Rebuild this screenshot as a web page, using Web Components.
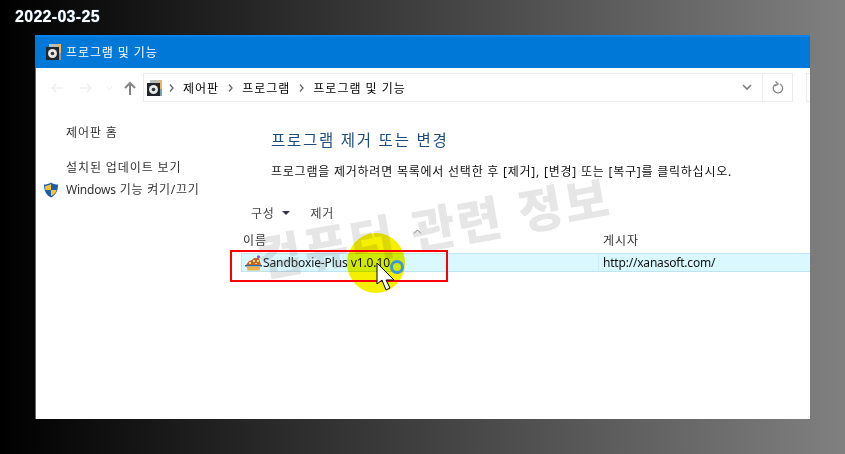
<!DOCTYPE html>
<html lang="ko">
<head>
<meta charset="utf-8">
<title>프로그램 및 기능</title>
<style>
    html, body { margin: 0; height: 100%; }
    body {
        width: 845px;
        height: 454px;
        overflow: hidden;
        background: linear-gradient(90deg, #000 0, #808080 100%);
        font: 12px "Noto Sans", "Noto Sans CJK KR", sans-serif;
    }
</style>
</head>
<body>
<shot-page>
    <explorer-window title-text="프로그램 및 기능">
        <address-bar slot="address"></address-bar>
        <side-links slot="side"></side-links>
        <program-list slot="main"></program-list>
    </explorer-window>
</shot-page>

<script>
const FONT = `"Noto Sans", "Noto Sans CJK KR", sans-serif`;

// 제어판 아이콘 (창 제목, 주소창 공용)
const cpIcon = /*html*/`
    <svg width="15" height="16" viewBox="0 0 15 16">
        <path d="M3 0h9v3H3z" fill="#b9bdb8"/>
        <path d="M12 0h3v9h-3z" fill="#f0b45c"/>
        <path d="M12 9h3v7h-3z" fill="#7d9fb0"/>
        <rect x="0" y="3" width="13" height="13" fill="#20262c"/>
        <circle cx="6.500" cy="9.500" r="4.500" fill="#e8e8e4"/>
        <circle cx="6.500" cy="9.500" r="1.800" fill="#30363a"/>
    </svg>`;

const crumbSep = (extra = '') => /*html*/`
    <svg class="sep" style="${extra}" width="5" height="8" viewBox="0 0 5 8"><path d="M1 0.500L4 4L1 7.500" fill="none" stroke="#666" stroke-width="1.300"/></svg>`;

class ShotPage extends HTMLElement {
    constructor() {
        super();
        this.attachShadow({ mode: 'open' }).innerHTML = /*html*/`
            <style>
                :host { display: block; width: 845px; height: 454px; position: relative; overflow: hidden; }
                .date {
                    height: 35px;
                    padding: 7px 0 0 15px;
                    box-sizing: border-box;
                    color: #fff;
                    font: bold 16px/20px "Liberation Sans", sans-serif;
                    letter-spacing: 0.3px;
                    text-shadow: 0 0 1px #8ab4e8;
                }
                .body { padding-left: 35px; }
            </style>
            <div class="date">2022-03-25</div>
            <div class="body"><slot></slot></div>
        `;
    }
}

class ExplorerWindow extends HTMLElement {
    constructor() {
        super();
        const title = this.getAttribute('title-text') || '';
        this.attachShadow({ mode: 'open' }).innerHTML = /*html*/`
            <style>
                :host {
                    display: block;
                    width: 775px;
                    height: 384px;
                    box-sizing: border-box;
                    background: #fff;
                    border-left: 1px solid #0a84e0;
                    font-family: ${FONT};
                }
                .title {
                    height: 33px;
                    margin-left: -1px;
                    background: linear-gradient(#0a84ea 0, #0a84ea 2px, #0078d7 2px);
                    display: flex;
                    align-items: center;
                    gap: 5px;
                    padding-left: 11px;
                    color: #fff;
                    font-size: 12px;
                    letter-spacing: 0.9px;
                }
                .title svg { flex: none; margin-top: 1px; }
                .columns { display: flex; }
                .side { width: 200px; flex: none; }
                .main { flex: 1; min-width: 0; }
            </style>
            <div class="title">${cpIcon}<span>${title}</span></div>
            <slot name="address"></slot>
            <div class="columns">
                <div class="side"><slot name="side"></slot></div>
                <div class="main"><slot name="main"></slot></div>
            </div>
        `;
    }
}

class AddressBar extends HTMLElement {
    constructor() {
        super();
        this.attachShadow({ mode: 'open' }).innerHTML = /*html*/`
            <style>
                :host {
                    display: flex;
                    height: 39px;
                    padding: 5px 0 5px 14px;
                    box-sizing: border-box;
                    align-items: stretch;
                    color: #000;
                    font-size: 12px;
                    letter-spacing: 1px;
                }
                .nav { width: 93px; flex: none; display: flex; align-items: center; }
                .nav svg { display: block; }
                .box {
                    width: 650px;
                    height: 29px;
                    box-sizing: border-box;
                    flex: none;
                    border: 1px solid #ececec;
                    display: flex;
                    align-items: center;
                    padding-left: 3px;
                }
                .crumbs { flex: 1; display: flex; align-items: center; gap: 9px; }
                .sep { flex: none; }
                .chev { width: 30px; display: flex; justify-content: center; }
                .reload {
                    width: 29px; align-self: stretch;
                    border-left: 1px solid #ececec;
                    display: flex; align-items: center; justify-content: center;
                }
                .search {
                    width: 4px; height: 29px; margin-left: 13px;
                    border: 1px solid #ececec; border-right: 0; box-sizing: border-box;
                }
            </style>
            <div class="nav">
                <svg width="92" height="18" viewBox="0 0 92 18">
                    <path d="M2 9h11M2 9l4-4M2 9l4 4" fill="none" stroke="#eceef0" stroke-width="1.500"/>
                    <path d="M30 9h11M41 9l-4-4M41 9l-4 4" fill="none" stroke="#eceef0" stroke-width="1.500"/>
                    <path d="M57 8l2.500 2.500L62 8" fill="none" stroke="#eceef0" stroke-width="1"/>
                    <path d="M80 16V4M75 9l5-5 5 5" fill="none" stroke="#858585" stroke-width="2"/>
                </svg>
            </div>
            <div class="box">
                <div class="crumbs">
                    ${cpIcon}
                    ${crumbSep('margin-left:-2px')}
                    <span>제어판</span>
                    ${crumbSep()}
                    <span>프로그램</span>
                    ${crumbSep()}
                    <span>프로그램 및 기능</span>
                </div>
                <div class="chev">
                    <svg width="10" height="7" viewBox="0 0 10 7"><path d="M1 1l4 4 4-4" fill="none" stroke="#808080" stroke-width="1.700"/></svg>
                </div>
                <div class="reload">
                    <svg width="12" height="13" viewBox="0 0 12 13"><path d="M3.500 3.200A4.700 4.700 0 1 0 8 3M3.500 0.500L6 3 3.200 5" fill="none" stroke="#808080" stroke-width="1.300"/></svg>
                </div>
            </div>
            <div class="search"></div>
        `;
    }
}

class SideLinks extends HTMLElement {
    constructor() {
        super();
        this.attachShadow({ mode: 'open' }).innerHTML = /*html*/`
            <style>
                :host {
                    display: block;
                    padding: 15px 0 0 7px;
                    color: #333;
                    font-size: 12px;
                    line-height: 16px;
                    letter-spacing: 0.9px;
                }
                .row { display: flex; align-items: center; height: 22px; gap: 7px; white-space: nowrap; }
                .row > span { margin-left: 23px; }
                .row svg + span { margin-left: 0; letter-spacing: 0.75px; }
                .gap { height: 13px; }
                .latin { letter-spacing: -0.2px; }
            </style>
            <div class="row"><span>제어판 홈</span></div>
            <div class="gap"></div>
            <div class="row"><span>설치된 업데이트 보기</span></div>
            <div class="row">
                <svg width="16" height="16" viewBox="0 0 16 16">
                    <path d="M8 0.500C10 2 12.500 2.600 15 2.600c0 5.600-1.800 10.500-7 12.900C2.800 13.100 1 8.200 1 2.600 3.500 2.600 6 2 8 0.500z" fill="#1f5fa8"/>
                    <path d="M8 2v6H2.400c-.2-1.300-.2-2.700-.2-4C4.500 3.800 6.400 3.200 8 2zM8 8h5.500C13 10.800 11 12.800 8 14z" fill="#f7c531"/>
                </svg>
                <span><span class="latin">Windows</span> 기능 켜기/끄기</span>
            </div>
        `;
    }
}

class ProgramList extends HTMLElement {
    constructor() {
        super();
        this.attachShadow({ mode: 'open' }).innerHTML = /*html*/`
            <style>
                :host { display: block; font-size: 12px; color: #1a1a1a; height: 312px; }
                h1 {
                    margin: 0;
                    padding: 22px 0 0 35px;
                    font-size: 15.500px;
                    font-weight: 400;
                    line-height: 22px;
                    letter-spacing: 1.750px;
                    color: #1c4c80;
                }
                .desc { margin: 12px 0 0; padding-left: 35px; line-height: 17px; color: #111; letter-spacing: 0.770px; white-space: nowrap; }
                .tools { display: flex; align-items: center; height: 22px; margin: 22px 0 0 15px; color: #444; letter-spacing: 0.700px; }
                .tools i { width: 0; height: 0; margin: 0 20px 0 8px; border: 4px solid transparent; border-top: 4px solid #334; border-bottom: 0; }
                .cols { display: flex; height: 21px; margin-top: 5px; padding-left: 7px; align-items: center; position: relative; color: #333; letter-spacing: 0.900px; }
                .cols span:first-of-type { width: 360px; }
                .sort { position: absolute; left: 177px; top: 0; }
                .row {
                    display: flex;
                    align-items: center;
                    height: 19px;
                    box-sizing: border-box;
                    margin: 3px 0 0 5px;
                    background: #d9f8ff;
                    border: 1px solid #bfe3f7;
                    border-right: 0;
                    color: #111;
                    letter-spacing: -0.100px;
                }
                .name { width: 357px; flex: none; display: flex; align-items: center; padding-left: 3px; box-sizing: border-box; border-right: 1px solid #cdeaf5; height: 100%; }
                .name svg { flex: none; }
                .pub { padding-left: 4px; letter-spacing: -0.200px; }
            </style>
            <h1>프로그램 제거 또는 변경</h1>
            <p class="desc">프로그램을 제거하려면 목록에서 선택한 후 [제거], [변경] 또는 [복구]를 클릭하십시오.</p>
            <div class="tools"><span>구성</span><i></i><span>제거</span></div>
            <div class="cols">
                <span>이름</span><span>게시자</span>
                <svg class="sort" width="9" height="5" viewBox="0 0 9 5"><path d="M1 4.500L4.500 1 8 4.500" fill="none" stroke="#888" stroke-width="1"/></svg>
            </div>
            <div class="row">
                <div class="name">
                    <svg width="18" height="16" viewBox="0 0 18 16">
                        <path d="M1 10L4 6L7 5L9 3L14 3L16 10z" fill="#c8642a"/>
                        <path d="M4 7h2v2H4zM8 5h2v2H8zM12 5h2v2h-2zM10 8h2v1h-2z" fill="#f6dc6a"/>
                        <circle cx="13.500" cy="1.800" r="1.600" fill="#a050c0"/>
                        <path d="M0 10h17v1.500H0z" fill="#2a6ea8"/>
                        <path d="M1.500 11.500h14l-1 4h-12z" fill="#eeb04a"/>
                    </svg>
                    <span>Sandboxie-Plus v1.0.10</span>
                </div>
                <div class="pub">http://xanasoft.com/</div>
            </div>
        `;
    }
}

// 스크린샷 위에 덧그린 요소: 워터마크, 빨간 박스, 마우스 강조
class ShotOverlay extends HTMLElement {
    constructor() {
        super();
        this.attachShadow({ mode: 'open' }).innerHTML = /*html*/`
            <style>
                :host { position: absolute; left: 0; top: 0; width: 845px; height: 454px; display: block; pointer-events: none; }
                .mark {
                    position: absolute;
                    left: 255px;
                    top: 195px;
                    transform: rotate(-10deg);
                    font: 900 48px/60px "Noto Sans CJK KR", sans-serif;
                    letter-spacing: 2.400px;
                    color: rgba(128, 128, 128, 0.2);
                    white-space: nowrap;
                }
                .spot { position: absolute; left: 347px; top: 233px; width: 58px; height: 60px; border-radius: 50%; background: #f5f000; mix-blend-mode: multiply; }
                .ring { position: absolute; left: 390px; top: 260px; width: 8px; height: 8px; border: 3px solid #3f97d8; border-radius: 50%; }
                .box { position: absolute; left: 230px; top: 250px; width: 218px; height: 32px; box-sizing: border-box; border: 2px solid #f00; }
                svg { position: absolute; left: 376px; top: 262px; }
            </style>
            <div class="mark">컴퓨터 관련 정보</div>
            <div class="spot"></div>
            <div class="box"></div>
            <div class="ring"></div>
            <svg width="20" height="30" viewBox="0 0 20 30">
                <path d="M1 1V22L6 18L10 28L14 26L10 18H18Z" fill="#fff" stroke="#000" stroke-width="1"/>
            </svg>
        `;
    }
}

customElements.define('shot-page', ShotPage);
customElements.define('explorer-window', ExplorerWindow);
customElements.define('address-bar', AddressBar);
customElements.define('side-links', SideLinks);
customElements.define('program-list', ProgramList);
customElements.define('shot-overlay', ShotOverlay);

document.querySelector('shot-page').appendChild(document.createElement('shot-overlay'));
</script>
</body>
</html>
